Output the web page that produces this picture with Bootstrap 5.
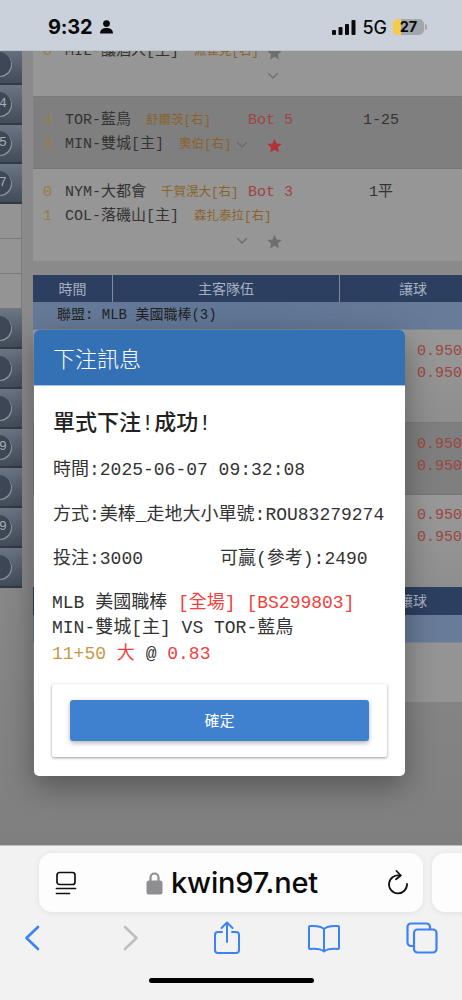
<!doctype html>
<html lang="zh-Hant">

<head>
	<meta charset="utf-8">
	<meta name="viewport" content="width=device-width, initial-scale=1">
	<title>下注訊息</title>
	<link href="https://cdn.jsdelivr.net/npm/bootstrap@5.3.5/dist/css/bootstrap.min.css" rel="stylesheet" crossorigin="anonymous">
	<style>
		html, body { height: 1000px; overflow: hidden; }
		body { background: #f2f2f3; }
		.phone { width: 462px; height: 1000px; overflow: hidden; }

		/* status bar */
		.statusbar { height: 51px; background: #cbd1da; border-bottom: 1px solid #bcc2ca; padding: 4px 35px 0 48px; font-family: Inter, "Liberation Sans", sans-serif; color: #0a0a0a; }
		.st-time { font-size: 20px; font-weight: 700; letter-spacing: -.2px; }
		.st-signal { margin-right: 6px; }
		.st-net { font-size: 18px; font-weight: 500; margin-right: 6px; }
		.st-batt { width: 31px; height: 16px; border-radius: 5px; background: linear-gradient(90deg, #f5cc4a 26%, #a2a6ad 26%); font-size: 14.5px; font-weight: 700; line-height: 16px; text-align: center; }
		.st-nub { width: 2px; height: 6px; background: #a2a6ad; border-radius: 0 2px 2px 0; margin-left: 1px; }

		/* dimmed page behind the dialog */
		.stage { height: 794px; background: linear-gradient(#8a8a8a 60%, #7f7f7f); overflow: hidden; font-family: "Liberation Mono", "Noto Sans CJK TC", monospace; font-size: 15px; color: #333; }
		.sidecol { width: 22px; margin-top: -6px; margin-right: 11px; flex: none; }
		.sidedark { height: 39.8px; background: linear-gradient(#6b7685, #424b58); border-bottom: 2px solid #323a45; overflow: hidden; }
		.sidedot { width: 24px; height: 24px; margin-left: -13px; border-radius: 50%; background: #3d4755; box-shadow: 1px 1px 0 #8c939c; color: #a9adb3; font-size: 13px; line-height: 24px; text-align: center; }
		.sidelight { height: 35px; background: #949494; border-bottom: 1px solid #787878; border-right: 1px solid #7d7d7d; }

		.maincol { width: 453px; flex: none; margin-top: -11px; }
		.grow-a { height: 57px; background: #969696; border-bottom: 1px solid #7a7a7a; }
		.grow-b { height: 72px; padding-top: 12px; background: #7f7f7f; border-bottom: 1px solid #767676; }
		.grow-c { height: 92px; padding-top: 12px; background: #969696; }
		.gline { height: 24px; display: flex; align-items: center; white-space: nowrap; }
		.gname { width: 215px; flex: none; display: flex; align-items: center; padding-left: 10px; }
		.gscore { width: 22px; flex: none; color: #94803f; }
		.gpit { margin-left: 15px; font-size: 12.5px; color: #8a6328; }
		.ginn { width: 68px; flex: none; color: #a04444; }
		.godds { width: 130px; flex: none; text-align: center; }
		.gchev { margin-left: auto; flex: none; }
		.gstar { margin-left: 19px; display: block; }

		.thead-bar { height: 27px; margin-top: 14px; background: #2c3f60; color: #a6b0c0; font-size: 14px; line-height: 26px; font-family: "Noto Sans CJK TC", sans-serif; }
		.thead-bar.second { margin-top: 0; height: 28px; }
		.th-time { width: 80px; text-align: center; border-right: 1px solid #7f8a9c; }
		.th-team { width: 227px; text-align: center; border-right: 1px solid #7f8a9c; }
		.th-hdp { width: 146px; text-align: center; }
		.league { height: 28px; background: linear-gradient(90deg, #667a98, #607696 50%, #6a7d99); border-bottom: 1px solid #7d8796; padding-left: 24px; font-size: 14px; line-height: 26px; color: #222; }
		.orow { padding-left: 384px; color: #9c4640; font-size: 15px; line-height: 22px; }
		.orow-a { height: 93px; padding-top: 11px; background: linear-gradient(#999, #8e8e8e); border-bottom: 1px solid #7a7a7a; }
		.orow-b { height: 72px; padding-top: 11px; background: #7f7f7f; border-bottom: 1px solid #767676; }
		.orow-c { height: 92px; padding-top: 10px; background: linear-gradient(#999, #8e8e8e); }
		.orow-d { height: 59px; background: #949494; }

		/* dialog */
		.betdlg { position: absolute; left: 34px; top: 330px; width: 371px; height: 446px; background: #fff; border: 0; border-radius: 5px; box-shadow: 0 10px 30px rgba(0, 0, 0, .35); font-family: "Liberation Mono", "Noto Sans CJK TC", monospace; color: #333; }
		.betdlg .modal-header { height: 56px; padding: 0 19px; background: #3470b4; border-bottom: 1px solid #a8c3e2; border-radius: 5px 5px 0 0; }
		.betdlg .modal-title { font-family: "Noto Sans CJK TC", sans-serif; font-size: 22px; font-weight: 300; color: #fff; }
		.betdlg .modal-body { padding: 23px 18px 0 19px; }
		.dlg-head { font-size: 22px; font-weight: 500; line-height: 32px; margin: 0 0 16px; color: #222; }
		.dlg-line { font-size: 18px; line-height: 26px; margin-bottom: 18.5px; white-space: nowrap; }
		.dlg-col { width: 167px; }
		.dlg-info { font-size: 18px; line-height: 25.5px; margin: 2px 0 17px -1px; white-space: nowrap; }
		.dlg-red { color: #f0413e; }
		.dlg-gold { color: #c29a45; }
		.dlg-card { width: 335px; height: 73px; margin-left: -1px; padding: 16px 18px; background: #fff; border: 0; border-radius: 2px; box-shadow: 0 1px 3px rgba(0, 0, 0, .4); }
		.dlg-ok { height: 41px; background: #4081cf; border: 0; border-radius: 3px; font-family: "Noto Sans CJK TC", sans-serif; font-size: 15px; box-shadow: 0 2px 5px rgba(0, 0, 0, .3); }

		/* safari */
		.safari { height: 155px; background: #f2f2f3; border-top: 1px solid #bdbdbd; overflow: hidden; }
		.addr-wrap { padding: 7px 0 0 39px; }
		.addr { width: 384px; height: 59px; flex: none; padding: 0 14px 0 16px; background: #fdfdfd; border-radius: 13px; box-shadow: 0 1px 6px rgba(0, 0, 0, .08); }
		.addr-next { width: 60px; height: 59px; flex: none; margin-left: 9px; background: #fdfdfd; border-radius: 13px; box-shadow: 0 1px 6px rgba(0, 0, 0, .08); }
		.addr-url { font-family: Inter, "Liberation Sans", sans-serif; font-size: 29px; font-weight: 500; letter-spacing: -.2px; color: #0b0b0b; }
		.toolrow { height: 48px; margin-top: 2px; margin-left: -17px; }
		.toolcell { width: 97.5px; flex: none; }
		.tool-fwd { margin-left: 4px; }
		.homebar { width: 165px; height: 5px; margin: 16px auto 0 149px; background: #000; border-radius: 3px; }
	</style>
</head>

<body>
	<svg width="0" height="0" class="position-absolute">
		<symbol id="ico-chev" viewBox="0 0 12 8"><polyline points="1.5,1.5 6,6 10.5,1.5" fill="none" stroke="currentColor" stroke-width="1.3" stroke-linecap="round" stroke-linejoin="round"/></symbol>
		<symbol id="ico-star" viewBox="0 0 24 24"><polygon points="12,1 15.4,8.6 23.5,9.5 17.5,15 19.2,23 12,18.9 4.8,23 6.5,15 .5,9.5 8.6,8.6" fill="currentColor"/></symbol>
	</svg>

	<div class="phone d-flex flex-column position-relative">
		<div class="statusbar d-flex align-items-center justify-content-between">
			<div class="d-flex align-items-center gap-2">
				<span class="st-time">9:32</span>
				<svg width="13" height="14" viewBox="0 0 13 14"><circle cx="6.5" cy="3.6" r="3.4" fill="#0a0a0a"/><path d="M0 13.5c0-3.8 2.7-5.5 6.5-5.5s6.5 1.700 6.5 5.500z" fill="#0a0a0a"/></svg>
			</div>
			<div class="d-flex align-items-center">
				<svg class="st-signal" width="24" height="15" viewBox="0 0 24 15"><rect x="0" y="10" width="4" height="5" rx="1" fill="#0a0a0a"/><rect x="6.500" y="7" width="4" height="8" rx="1" fill="#0a0a0a"/><rect x="13" y="4" width="4" height="11" rx="1" fill="#0a0a0a"/><rect x="19.500" y="0" width="4" height="15" rx="1" fill="#0a0a0a"/></svg>
				<span class="st-net">5G</span>
				<div class="st-batt">27</div>
				<div class="st-nub"></div>
			</div>
		</div>

		<div class="stage d-flex position-relative">
			<div class="sidecol">
				<div class="sidedark d-flex align-items-center"><div class="sidedot"></div></div>
				<div class="sidedark d-flex align-items-center"><div class="sidedot">14</div></div>
				<div class="sidedark d-flex align-items-center"><div class="sidedot">15</div></div>
				<div class="sidedark d-flex align-items-center"><div class="sidedot">17</div></div>
				<div class="sidelight"></div>
				<div class="sidelight"></div>
				<div class="sidelight"></div>
				<div class="sidedark d-flex align-items-center"><div class="sidedot"></div></div>
				<div class="sidedark d-flex align-items-center"><div class="sidedot"></div></div>
				<div class="sidedark d-flex align-items-center"><div class="sidedot"></div></div>
				<div class="sidedark d-flex align-items-center"><div class="sidedot">19</div></div>
				<div class="sidedark d-flex align-items-center"><div class="sidedot"></div></div>
				<div class="sidedark d-flex align-items-center"><div class="sidedot">29</div></div>
				<div class="sidedark d-flex align-items-center"><div class="sidedot"></div></div>
			</div>

			<div class="maincol">
				<div class="grow-a">
					<div class="gline"><div class="gname"><span class="gscore">0</span><span>MIL-釀酒人[主]</span><span class="gpit">派崔克[右]</span></div><div class="ginn"><svg class="gstar" width="15" height="15" style="color:#6e6e6e"><use href="#ico-star"/></svg></div></div>
					<div class="gline"><div class="gname"></div><div class="ginn"><svg class="gstar" width="12" height="8" style="color:#6f6f6f"><use href="#ico-chev"/></svg></div></div>
				</div>
				<div class="grow-b">
					<div class="gline"><div class="gname"><span class="gscore">4</span><span>TOR-藍鳥</span><span class="gpit">舒爾茨[右]</span></div><div class="ginn">Bot 5</div><div class="godds">1-25</div></div>
					<div class="gline"><div class="gname"><span class="gscore">3</span><span>MIN-雙城[主]</span><span class="gpit">奧伯[右]</span><svg class="gchev" width="12" height="8" style="color:#6a6a6a"><use href="#ico-chev"/></svg></div><div class="ginn"><svg class="gstar" width="15" height="15" style="color:#b03338"><use href="#ico-star"/></svg></div></div>
				</div>
				<div class="grow-c">
					<div class="gline"><div class="gname"><span class="gscore">0</span><span>NYM-大都會</span><span class="gpit">千賀滉大[右]</span></div><div class="ginn">Bot 3</div><div class="godds">1平</div></div>
					<div class="gline"><div class="gname"><span class="gscore">1</span><span>COL-落磯山[主]</span><span class="gpit">森扎泰拉[右]</span></div></div>
					<div class="gline"><div class="gname"><svg class="gchev" width="12" height="8" style="color:#6a6a6a"><use href="#ico-chev"/></svg></div><div class="ginn"><svg class="gstar" width="15" height="15" style="color:#6e6e6e"><use href="#ico-star"/></svg></div></div>
				</div>

				<div class="thead-bar d-flex"><div class="th-time">時間</div><div class="th-team">主客隊伍</div><div class="th-hdp">讓球</div></div>
				<div class="league">聯盟: MLB 美國職棒(3)</div>
				<div class="orow orow-a">0.950<br>0.950</div>
				<div class="orow orow-b">0.950<br>0.950</div>
				<div class="orow orow-c">0.950<br>0.950</div>
				<div class="thead-bar second d-flex"><div class="th-time"></div><div class="th-team"></div><div class="th-hdp">讓球</div></div>
				<div class="league"></div>
				<div class="orow-d"></div>
			</div>
		</div>

		<div class="modal-content betdlg">
			<div class="modal-header"><h5 class="modal-title">下注訊息</h5></div>
			<div class="modal-body">
				<p class="dlg-head">單式下注!成功!</p>
				<div class="dlg-line">時間:2025-06-07 09:32:08</div>
				<div class="dlg-line">方式:美棒_走地大小單號:ROU83279274</div>
				<div class="dlg-line d-flex"><div class="dlg-col">投注:3000</div><div>可贏(參考):2490</div></div>
				<div class="dlg-info">
					MLB 美國職棒 <span class="dlg-red">[全場] [BS299803]</span><br>
					MIN-雙城[主] VS TOR-藍鳥<br>
					<span class="dlg-gold">11+50</span> <span class="dlg-red">大</span> @ <span class="dlg-red">0.83</span>
				</div>
				<div class="card dlg-card"><button type="button" class="btn btn-primary w-100 dlg-ok">確定</button></div>
			</div>
		</div>

		<div class="safari">
			<div class="addr-wrap d-flex">
				<div class="addr d-flex align-items-center justify-content-between">
					<svg width="22" height="24" viewBox="0 0 22 24" fill="none" stroke="#111" stroke-width="1.700" stroke-linecap="round"><rect x="2" y="1.500" width="18" height="12" rx="2.500"/><path d="M1.500 17.500h19M1.500 22.500h13"/></svg>
					<div class="d-flex align-items-center gap-2">
						<svg width="17" height="24" viewBox="0 0 17 24"><path d="M4.500 10V6.500a4 4 0 0 1 8 0V10" fill="none" stroke="#8e8e90" stroke-width="2.200"/><rect x="0.500" y="9.500" width="16" height="14" rx="2.500" fill="#8e8e90"/></svg>
						<span class="addr-url">kwin97.net</span>
					</div>
					<svg width="22" height="26" viewBox="0 0 22 26" fill="none" stroke="#111" stroke-width="1.800" stroke-linecap="round" stroke-linejoin="round"><path d="M13 5.600A9 9 0 1 0 20 14"/><path d="M9.500 1l4.300 4.500-4.800 3.700"/></svg>
				</div>
				<div class="addr-next"></div>
			</div>
			<div class="toolrow d-flex align-items-center">
				<div class="toolcell d-flex justify-content-center"><svg width="16" height="26" viewBox="0 0 16 26" fill="none" stroke="#3b82f6" stroke-width="2.600" stroke-linecap="round" stroke-linejoin="round"><path d="M14 2L2.500 13 14 24"/></svg></div>
				<div class="toolcell d-flex justify-content-center"><svg class="tool-fwd" width="16" height="26" viewBox="0 0 16 26" fill="none" stroke="#bfbfc1" stroke-width="2.600" stroke-linecap="round" stroke-linejoin="round"><path d="M2 2l11.500 11L2 24"/></svg></div>
				<div class="toolcell d-flex justify-content-center"><svg width="28" height="34" viewBox="0 0 28 34" fill="none" stroke="#3b82f6" stroke-width="2" stroke-linecap="round" stroke-linejoin="round"><path d="M9 11H5a3 3 0 0 0-3 3v15a3 3 0 0 0 3 3h18a3 3 0 0 0 3-3V14a3 3 0 0 0-3-3h-4"/><path d="M14 21V2M8.500 7L14 1.500 19.500 7"/></svg></div>
				<div class="toolcell d-flex justify-content-center"><svg width="34" height="29" viewBox="0 0 34 29" fill="none" stroke="#3b82f6" stroke-width="2" stroke-linecap="round" stroke-linejoin="round"><path d="M17 5c-2.500-2.500-7-3.500-14-3-.7 0-1 .5-1 1v21c0 .6.400 1 1 1 6-.5 11 0 14 2.500 3-2.500 8-3 14-2.500.6 0 1-.4 1-1V3c0-.5-.3-1-1-1-7-.5-11.500.5-14 3z"/><path d="M17 5v22"/></svg></div>
				<div class="toolcell d-flex justify-content-center"><svg width="32" height="32" viewBox="0 0 32 32" fill="none" stroke="#3b82f6" stroke-width="2.200" stroke-linejoin="round"><path d="M7 24H5a3.500 3.500 0 0 1-3.500-3.500V5A3.500 3.500 0 0 1 5 1.500h15.500A3.500 3.500 0 0 1 24 5v2"/><rect x="8" y="7.500" width="22.500" height="23" rx="3.500"/></svg></div>
			</div>
			<div class="homebar"></div>
		</div>
	</div>

	<script src="https://cdn.jsdelivr.net/npm/bootstrap@5.3.5/dist/js/bootstrap.bundle.min.js" crossorigin="anonymous"></script>
</body>

</html>
